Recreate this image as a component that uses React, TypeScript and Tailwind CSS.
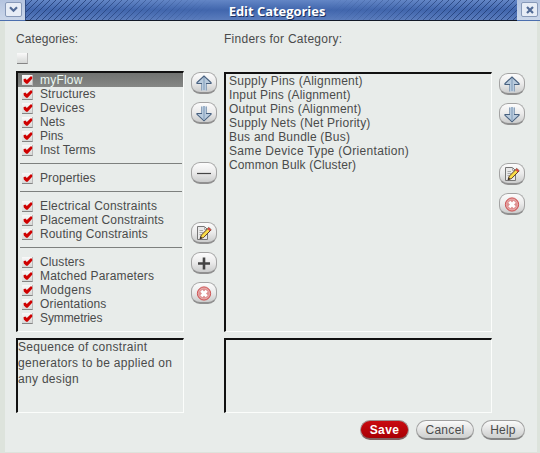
import type { ReactNode } from "react";

type Row = { label: string; track: string } | null;

const categories: Row[] = [
  { label: "myFlow", track: "tracking-[0.2px]" },
  { label: "Structures", track: "tracking-[0.1px]" },
  { label: "Devices", track: "tracking-[0.3px]" },
  { label: "Nets", track: "tracking-[0.1px]" },
  { label: "Pins", track: "tracking-[0px]" },
  { label: "Inst Terms", track: "tracking-[0.05px]" },
  null,
  { label: "Properties", track: "tracking-[0.1px]" },
  null,
  { label: "Electrical Constraints", track: "tracking-[0.2px]" },
  { label: "Placement Constraints", track: "tracking-[0.15px]" },
  { label: "Routing Constraints", track: "tracking-[0.13px]" },
  null,
  { label: "Clusters", track: "tracking-[0.1px]" },
  { label: "Matched Parameters", track: "tracking-[0.15px]" },
  { label: "Modgens", track: "tracking-[0.3px]" },
  { label: "Orientations", track: "tracking-[0.15px]" },
  { label: "Symmetries", track: "tracking-[-0.1px]" },
];

const finders = [
  { label: "Supply Pins (Alignment)", track: "tracking-[0.25px]" },
  { label: "Input Pins (Alignment)", track: "tracking-[0.16px]" },
  { label: "Output Pins (Alignment)", track: "tracking-[0.22px]" },
  { label: "Supply Nets (Net Priority)", track: "tracking-[0.24px]" },
  { label: "Bus and Bundle (Bus)", track: "tracking-[0.22px]" },
  { label: "Same Device Type (Orientation)", track: "tracking-[0.32px]" },
  { label: "Common Bulk (Cluster)", track: "tracking-[0.12px]" },
];

function Check({ checked }: { checked?: boolean }) {
  return (
    <span className="block h-[11px] w-[11px] shrink-0 border-r border-b border-[#858585] border-r-[#b9b9b9] bg-linear-to-b from-[#fafafa] to-[#d6d8d7]">
      {checked && (
        <svg width="11" height="11" viewBox="0 0 11 11" className="block">
          <path d="M1.5 4.2L3.4 3.5L4.8 5.1L8.8 1.3L10.2 1.8V3.8L5.6 8.8H4.2L1.8 6.4Z" fill="#cf0000" />
        </svg>
      )}
    </span>
  );
}

function ToolButton({ children }: { children: ReactNode }) {
  return (
    <button className="flex h-[22px] w-[26px] items-center justify-center rounded-[9px] border border-b-2 border-[#a3a3a3] border-b-[#909090] bg-linear-to-b from-[#fcfcfc] via-[#ebebeb] to-[#cbcccc]">
      <svg width="18" height="18" viewBox="0 0 18 18" className="block shrink-0">
        {children}
      </svg>
    </button>
  );
}

const UpArrow = () => (
  <ToolButton>
    <path d="M6.5 16.5V9.5H1.5V8.5L9 1.5L16.5 8.5V9.5H11.5V16.5Z" fill="#b9cbdd" />
    <path d="M9 3V16" stroke="#9cb3cb" strokeWidth="2" />
    <path d="M6.5 16.5V9.5" stroke="#8ea3bb" />
    <path d="M11.5 16.5V9.5" stroke="#8ea3bb" />
    <path d="M7 9.5H2V8.5L9 2L16 8.5V9.5H11" fill="none" stroke="#49617f" strokeWidth="1.1" />
  </ToolButton>
);

const DownArrow = () => (
  <ToolButton>
    <path d="M6.5 2.5V9.5H1.5V10.5L9 17L16.5 10.5V9.5H11.5V2.5Z" fill="#b9cbdd" />
    <path d="M9 2V15" stroke="#9cb3cb" strokeWidth="2" />
    <path d="M6.5 2.5V9.5M11.5 2.5V9.5" stroke="#8ea3bb" />
    <path d="M7 9.5H2V10.3L9 16.8L16 10.3V9.5H11" fill="none" stroke="#49617f" strokeWidth="1.1" />
  </ToolButton>
);

const EditButton = () => (
  <ToolButton>
    <path d="M2.5 2.5H9.5L12.5 5.5V15.5H2.5Z" fill="#e9e9e9" stroke="#777777" />
    <path d="M9.5 2.5V5.5H12.5M4.5 6.5H8M4.5 8.5H8M4.5 10.5H6.5" fill="none" stroke="#a9a9a9" />
    <path d="M5 14.8L6.2 11.2L13.8 3.6L16.2 5.8L8.6 13.5Z" fill="#f9dc48" stroke="#4c2c20" strokeWidth="0.9" />
    <path d="M12.4 5L13.8 3.6L16.2 5.8L14.8 7.2Z" fill="#d94848" />
    <path d="M5 14.8L5.8 12.5L7.2 14Z" fill="#222222" />
  </ToolButton>
);

const DeleteButton = () => (
  <ToolButton>
    <circle cx="9" cy="9.5" r="6.6" fill="#dd8f8f" stroke="#cd5050" />
    <circle cx="9" cy="9.5" r="5.4" fill="none" stroke="#eebcbc" strokeWidth="0.6" />
    <path d="M6.3 6.8L11.7 12.2M11.7 6.8L6.3 12.2" stroke="#ffffff" strokeWidth="3" />
  </ToolButton>
);

function Hatch({ id, fade }: { id: string; fade: string }) {
  return (
    <div className={`h-[20px] w-0 min-w-0 flex-1 overflow-hidden ${fade}`}>
      <svg className="block h-full w-full">
        <defs>
          <pattern id={id} width="6" height="6" patternUnits="userSpaceOnUse">
            <path d="M-1 7L7 -1M-1 1L1 -1M5 7L7 5" stroke="#1d3870" strokeOpacity="0.75" strokeWidth="1" />
          </pattern>
        </defs>
        <rect width="100%" height="100%" fill={`url(#${id})`} />
      </svg>
    </div>
  );
}

const frame =
  "border-t-2 border-l-2 border-r border-b border-t-[#111111] border-l-[#111111] border-r-[#fbfdfb] border-b-[#fbfdfb]";

export default function App() {
  return (
    <div className="flex h-[453px] w-[540px] flex-col overflow-hidden bg-[#e8ecea] font-['Liberation_Sans',Arial,sans-serif] text-[12px] leading-[14px] text-[#4a4b4b]">
      <header className="flex h-[21px] shrink-0 bg-linear-to-b from-[#b4c4df] to-[#ccd8ea]">
        <div className="flex w-[25px] shrink-0 items-start justify-end border-b border-[#4c6fae] pt-[2px] pr-[3px]">
          <div className="flex h-[15px] w-[17px] items-center justify-center rounded-[2px] border border-[#8799b8] bg-[#e7edf6]">
            <svg width="9" height="7" viewBox="0 0 9 7">
              <path d="M1 1.2L4.5 4.7L8 1.2" fill="none" stroke="#526b96" strokeWidth="2.2" />
            </svg>
          </div>
        </div>
        <div className="flex min-w-0 flex-1 items-center justify-center border-b border-l border-[#111827] border-l-[#304d86] bg-linear-to-b from-[#6386c6] via-[#4166ad] to-[#5b7dbd]">
          <Hatch id="hatch-left" fade="mask-r-from-30%" />
          <h1 className="pt-[2px] pr-[4px] pl-[15px] font-['Open_Sans',sans-serif] text-[13px] leading-[18px] font-bold tracking-[-0.05px] whitespace-nowrap text-white [text-shadow:1px_1px_0_#1c3160]">Edit Categories</h1>
          <Hatch id="hatch-right" fade="mask-l-from-30%" />
        </div>
        <div className="flex w-[23px] shrink-0 items-start border-b border-[#4c6fae] pt-[2px] pl-[4px]">
          <div className="flex h-[15px] w-[17px] items-center justify-center rounded-[2px] border border-[#8799b8] bg-[#e7edf6]">
            <svg width="8" height="8" viewBox="0 0 8 8">
              <path d="M1 1L7 7M7 1L1 7" stroke="#526b96" strokeWidth="2.2" />
            </svg>
          </div>
        </div>
      </header>
      <main className="flex flex-1 flex-col border-r-3 border-b border-l-5 border-[#dde3dc]">
        <div className="flex pl-[11px]">
          <section className="w-[168px] pt-[11px]">
            <h2 className="h-[21px] tracking-[0.08px]">Categories:</h2>
            <div className="h-[18px] pl-[1px]">
              <Check />
            </div>
            <div className={`h-[261px] ${frame}`}>
              {categories.map((row, i) =>
                row ? (
                  <div
                    key={i}
                    className={`flex h-[14px] items-center pl-[4px] ${i === 0 ? "bg-linear-to-b from-[#717371] to-[#858785] text-[#eaf8f2]" : ""}`}
                  >
                    <Check checked />
                    <span className={`pl-[7px] whitespace-nowrap ${row.track}`}>{row.label}</span>
                  </div>
                ) : (
                  <div key={i} className="flex h-[14px] items-start pt-[6px] pr-px pl-[2px]">
                    <div className="h-px flex-1 bg-[#7d807e]" />
                  </div>
                ),
              )}
            </div>
            <div className={`mt-[6px] h-[75px] leading-[16px] tracking-[0.3px] ${frame}`}>
              <p className="-mt-px">
                Sequence of constraint
                <br />
                generators to be applied on
                <br />
                any design
              </p>
            </div>
          </section>
          <div className="ml-[7px] flex w-[26px] flex-col gap-[8px] pt-[51px]">
            <UpArrow />
            <DownArrow />
            <div className="pt-[30px]">
              <ToolButton>
                <path d="M2 9.5H16" stroke="#444444" strokeWidth="1.2" />
              </ToolButton>
            </div>
            <div className="pt-[30px]">
              <EditButton />
            </div>
            <ToolButton>
              <path d="M3 9.5H15M9 3.5V15.5" stroke="#444444" strokeWidth="2.6" />
            </ToolButton>
            <DeleteButton />
          </div>
          <section className="ml-[7px] w-[268px] pt-[11px]">
            <h2 className="h-[40px] tracking-[0.27px]">Finders for Category:</h2>
            <div className={`h-[260px] pl-[3px] ${frame}`}>
              {finders.map((f) => (
                <div key={f.label} className={`h-[14px] ${f.track}`}>{f.label}</div>
              ))}
            </div>
            <div className={`mt-[6px] h-[75px] ${frame}`} />
          </section>
          <div className="ml-[7px] flex w-[26px] flex-col gap-[8px] pt-[52px]">
            <UpArrow />
            <DownArrow />
            <div className="pt-[30px]">
              <EditButton />
            </div>
            <DeleteButton />
          </div>
        </div>
        <footer className="flex justify-end gap-[7px] pt-[7px] pr-[12px]">
          <button className="h-[20px] w-[49px] rounded-full border border-b-2 border-[#a09090] border-b-[#806060] bg-linear-to-b from-[#c90b10] to-[#a90005] text-[12px] leading-[16px] font-bold tracking-[0.4px] text-white">Save</button>
          <button className="h-[20px] w-[58px] rounded-full border border-b-2 border-[#a0a0a0] border-b-[#858585] bg-linear-to-b from-[#fafafa] to-[#cdcfce] leading-[16px] tracking-[0.3px]">Cancel</button>
          <button className="h-[20px] w-[44px] rounded-full border border-b-2 border-[#a0a0a0] border-b-[#858585] bg-linear-to-b from-[#fafafa] to-[#cdcfce] leading-[16px] tracking-[0.2px]">Help</button>
        </footer>
      </main>
    </div>
  );
}
